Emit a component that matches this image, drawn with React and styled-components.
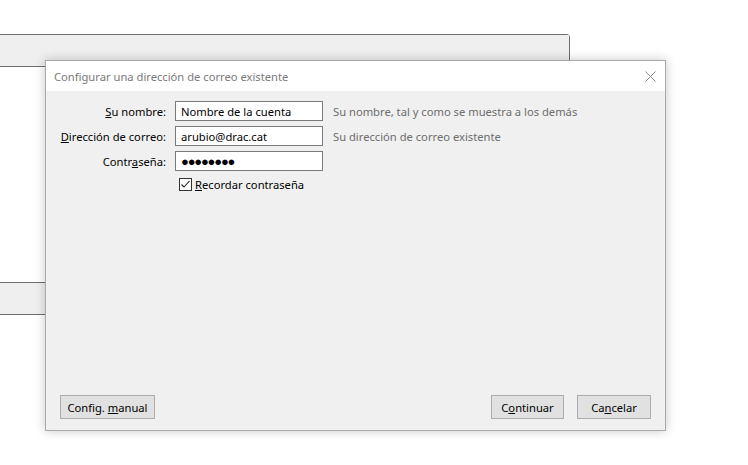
import React from 'react'
import styled, { createGlobalStyle } from 'styled-components'

const GlobalStyle = createGlobalStyle`
    html, body {
        margin: 0;
        padding: 0;
        background: #ffffff;
        font-family: 'Noto Sans', 'Open Sans', sans-serif;
        font-size: 11.2px;
        color: #000;
    }
`

const Desktop = styled.div`
    position: relative;
    width: 748px;
    height: 465px;
    overflow: hidden;
    background: #ffffff;
`

const BackWindow = styled.div`
    position: absolute;
    left: -1px;
    top: 34px;
    width: 569px;
    border: 1px solid #6e6e6e;
    border-top-right-radius: 3px;
    background: #ffffff;
    display: flex;
    flex-direction: column;
`

const BackHeader = styled.div`
    height: 31px;
    background: #efefef;
    border-bottom: 1px solid #6e6e6e;
`

const BackBody = styled.div`
    height: 215px;
    background: #ffffff;
`

const BackBand = styled.div`
    height: 31px;
    background: #efefef;
    border-top: 1px solid #6e6e6e;
`

const Dialog = styled.div`
    position: absolute;
    left: 45px;
    top: 60px;
    width: 619px;
    height: 369px;
    border: 1px solid #aaaaaa;
    background: #f0f0f0;
    box-shadow: 0 0 10px rgba(0, 0, 0, 0.22);
    display: flex;
    flex-direction: column;
`

const TitleBar = styled.div`
    height: 30px;
    background: #ffffff;
    display: flex;
    align-items: center;
    justify-content: space-between;
    padding: 0 9px 0 8px;
`

const Title = styled.span`
    color: #7a7a7a;
`

const CloseIcon = styled.svg`
    width: 11px;
    height: 11px;
`

const Body = styled.div`
    flex: 1;
    display: flex;
    flex-direction: column;
    justify-content: space-between;
    padding: 10px 14px 11px 14px;
`

const Form = styled.div`
    display: grid;
    grid-template-columns: 106px 148px auto;
    column-gap: 9px;
    row-gap: 5px;
    align-items: center;
`

const Label = styled.label`
    text-align: right;
    white-space: nowrap;
`

const Input = styled.div`
    box-sizing: border-box;
    height: 20px;
    background: #ffffff;
    border: 1px solid #7a7a7a;
    padding: 0 5px;
    display: flex;
    align-items: center;
    white-space: nowrap;
    font-size: ${(props) => (props.secret ? '13px' : '11.2px')};
    letter-spacing: ${(props) => (props.secret ? '-1.2px' : '0')};
`

const Hint = styled.span`
    color: #6d6d6d;
    padding-left: 1px;
    white-space: nowrap;
`

const CheckRow = styled.div`
    grid-column: 2 / 4;
    display: flex;
    align-items: center;
    gap: 3px;
    padding-left: 4px;
    margin-top: 1px;
`

const Box = styled.svg`
    width: 13px;
    height: 13px;
    flex: none;
`

const Footer = styled.div`
    display: flex;
    align-items: center;
    justify-content: space-between;
`

const ButtonGroup = styled.div`
    display: flex;
    gap: 13px;
`

const Button = styled.button`
    box-sizing: border-box;
    height: 24px;
    width: ${(props) => props.w}px;
    background: #e1e1e1;
    border: 1px solid #adadad;
    font-family: inherit;
    font-size: 11.2px;
    color: #000;
    padding: 0;
`

const Key = styled.span`
    text-decoration: underline;
`

const App = () => {
    return (
        <Desktop>
            <GlobalStyle />
            <BackWindow>
                <BackHeader />
                <BackBody />
                <BackBand />
            </BackWindow>
            <Dialog>
                <TitleBar>
                    <Title>Configurar una dirección de correo existente</Title>
                    <CloseIcon viewBox="0 0 11 11">
                        <path d="M0.5 0.5 L10.5 10.5 M10.5 0.5 L0.5 10.5" stroke="#8a8a8a" strokeWidth="1" fill="none" />
                    </CloseIcon>
                </TitleBar>
                <Body>
                    <Form>
                        <Label>
                            <Key>S</Key>u nombre:
                        </Label>
                        <Input>Nombre de la cuenta</Input>
                        <Hint>Su nombre, tal y como se muestra a los demás</Hint>

                        <Label>
                            <Key>D</Key>irección de correo:
                        </Label>
                        <Input>arubio@drac.cat</Input>
                        <Hint>Su dirección de correo existente</Hint>

                        <Label>
                            Contr<Key>a</Key>seña:
                        </Label>
                        <Input secret>●●●●●●●●</Input>
                        <span />

                        <CheckRow>
                            <Box viewBox="0 0 13 13">
                                <rect x="0.5" y="0.5" width="12" height="12" fill="#ffffff" stroke="#333333" />
                                <path d="M2.5 6.5 L5 9 L10.5 3" stroke="#222222" strokeWidth="1.1" fill="none" />
                            </Box>
                            <span>
                                <Key>R</Key>ecordar contraseña
                            </span>
                        </CheckRow>
                    </Form>
                    <Footer>
                        <Button w={95}>
                            Config. <Key>m</Key>anual
                        </Button>
                        <ButtonGroup>
                            <Button w={73}>
                                C<Key>o</Key>ntinuar
                            </Button>
                            <Button w={74}>
                                Ca<Key>n</Key>celar
                            </Button>
                        </ButtonGroup>
                    </Footer>
                </Body>
            </Dialog>
        </Desktop>
    )
}

export default App
